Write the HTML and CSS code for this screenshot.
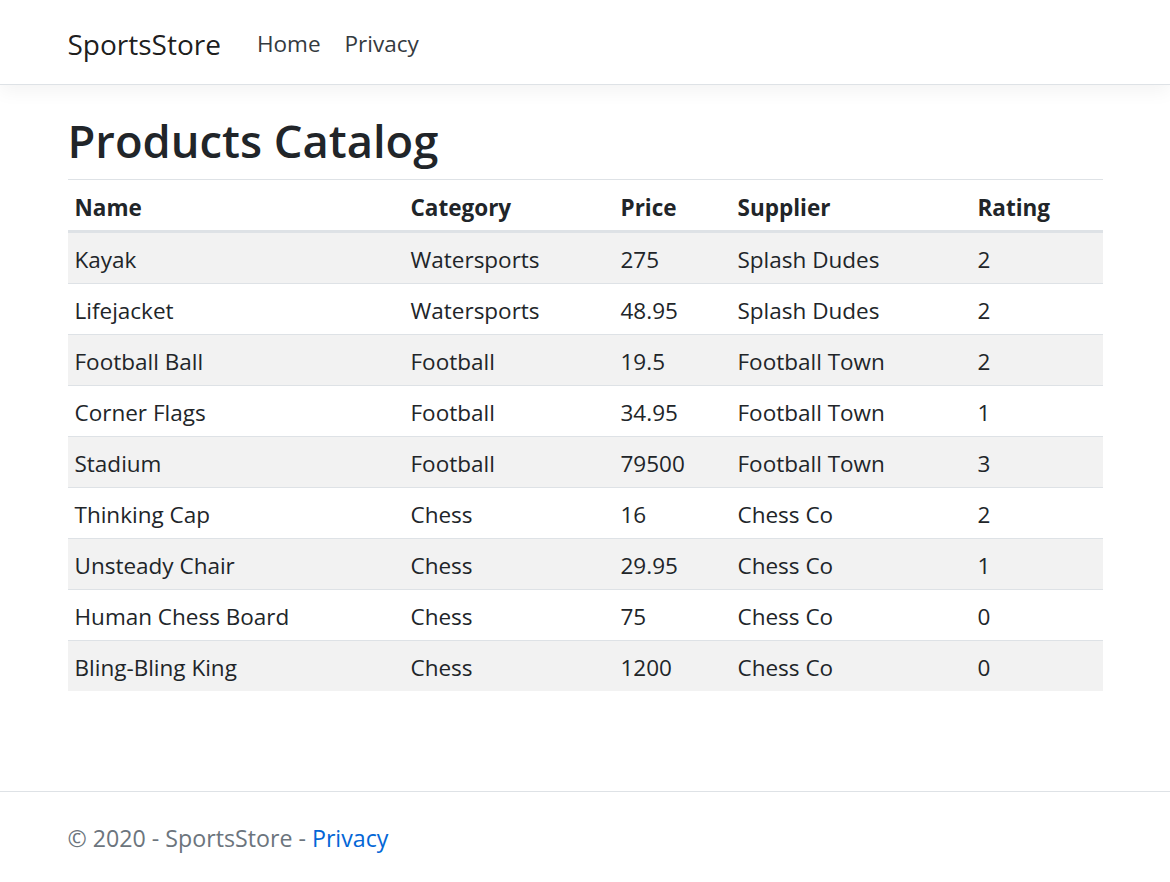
FILE: index.html
```html
<!DOCTYPE html>
<html lang="en">
<head>
<meta charset="utf-8">
<title>SportsStore</title>
<link rel="stylesheet" href="styles.css">
</head>
<body>
<header class="site-header">
  <nav class="navbar">
    <div class="container nav-inner">
      <a class="brand" href="#">SportsStore</a>
      <ul class="nav-links">
        <li><a class="nav-link" href="#">Home</a></li>
        <li><a class="nav-link" href="#">Privacy</a></li>
      </ul>
    </div>
  </nav>
</header>
<main class="container main">
  <h2 class="title">Products Catalog</h2>
  <table class="products">
    <thead>
      <tr>
        <th class="c-name">Name</th>
        <th class="c-cat">Category</th>
        <th class="c-price">Price</th>
        <th class="c-sup">Supplier</th>
        <th class="c-rate">Rating</th>
      </tr>
    </thead>
    <tbody>
      <tr><td>Kayak</td><td>Watersports</td><td>275</td><td>Splash Dudes</td><td>2</td></tr>
      <tr><td>Lifejacket</td><td>Watersports</td><td>48.95</td><td>Splash Dudes</td><td>2</td></tr>
      <tr><td>Football Ball</td><td>Football</td><td>19.5</td><td>Football Town</td><td>2</td></tr>
      <tr><td>Corner Flags</td><td>Football</td><td>34.95</td><td>Football Town</td><td>1</td></tr>
      <tr><td>Stadium</td><td>Football</td><td>79500</td><td>Football Town</td><td>3</td></tr>
      <tr><td>Thinking Cap</td><td>Chess</td><td>16</td><td>Chess Co</td><td>2</td></tr>
      <tr><td>Unsteady Chair</td><td>Chess</td><td>29.95</td><td>Chess Co</td><td>1</td></tr>
      <tr><td>Human Chess Board</td><td>Chess</td><td>75</td><td>Chess Co</td><td>0</td></tr>
      <tr><td>Bling-Bling King</td><td>Chess</td><td>1200</td><td>Chess Co</td><td>0</td></tr>
    </tbody>
  </table>
</main>
<footer class="footer">
  <div class="container">&copy; 2020 - SportsStore - <a class="footer-link" href="#">Privacy</a></div>
</footer>
</body>
</html>
```
FILE: styles.css
```css
* { box-sizing: border-box; }
html, body { margin: 0; padding: 0; }
body {
  min-height: 100vh;
  display: flex;
  flex-direction: column;
  font-family: "Open Sans", "Noto Sans", "DejaVu Sans", sans-serif;
  font-size: 22.5px;
  line-height: 36px;
  color: #212529;
  background: #fff;
}
a { text-decoration: none; }
.container {
  width: 1035px;
  margin: 0 auto;
}
.site-header {
  border-bottom: 1px solid #dee2e6;
  box-shadow: 0 6px 18px rgba(0,0,0,0.05);
  background: #fff;
}
.navbar {
  height: 84px;
  padding-top: 3px;
  display: flex;
  align-items: center;
}
.nav-inner {
  display: flex;
  align-items: center;
}
.brand {
  font-size: 28px;
  color: rgba(0,0,0,0.9);
  margin-right: 24px;
  line-height: 46px;
}
.nav-links {
  display: flex;
  list-style: none;
  margin: 0;
  padding: 0;
}
.nav-link {
  display: block;
  padding: 0 12px;
  color: #343a40;
  font-size: 22.5px;
  line-height: 46px;
}
.main {
  padding-top: 24px;
  padding-bottom: 24px;
}
.title {
  margin: 3px 0 9px 0;
  font-size: 45.3px;
  font-weight: 600;
  line-height: 58px;
}
.products {
  width: 100%;
  border-collapse: separate;
  border-spacing: 0;
}
.products th, .products td {
  text-align: left;
  padding: 9px 7px 5px 7px;
  vertical-align: top;
  border-top: 1px solid #dee2e6;
}
.products thead th {
  font-weight: 700;
  padding: 10px 7px 4px 7px;
  border-bottom: 2px solid #dee2e6;
}
.products tbody tr:nth-child(odd) { background: #f2f2f2; }
.c-name { width: 336px; }
.c-cat { width: 210px; }
.c-price { width: 117px; }
.c-sup { width: 240px; }
.c-rate { width: 132px; }
.footer {
  margin-top: auto;
  border-top: 1px solid #dee2e6;
  height: 91px;
  line-height: 93px;
  color: #6c757d;
  font-size: 23.2px;
}
.footer-link { color: #0366d6; }
```
